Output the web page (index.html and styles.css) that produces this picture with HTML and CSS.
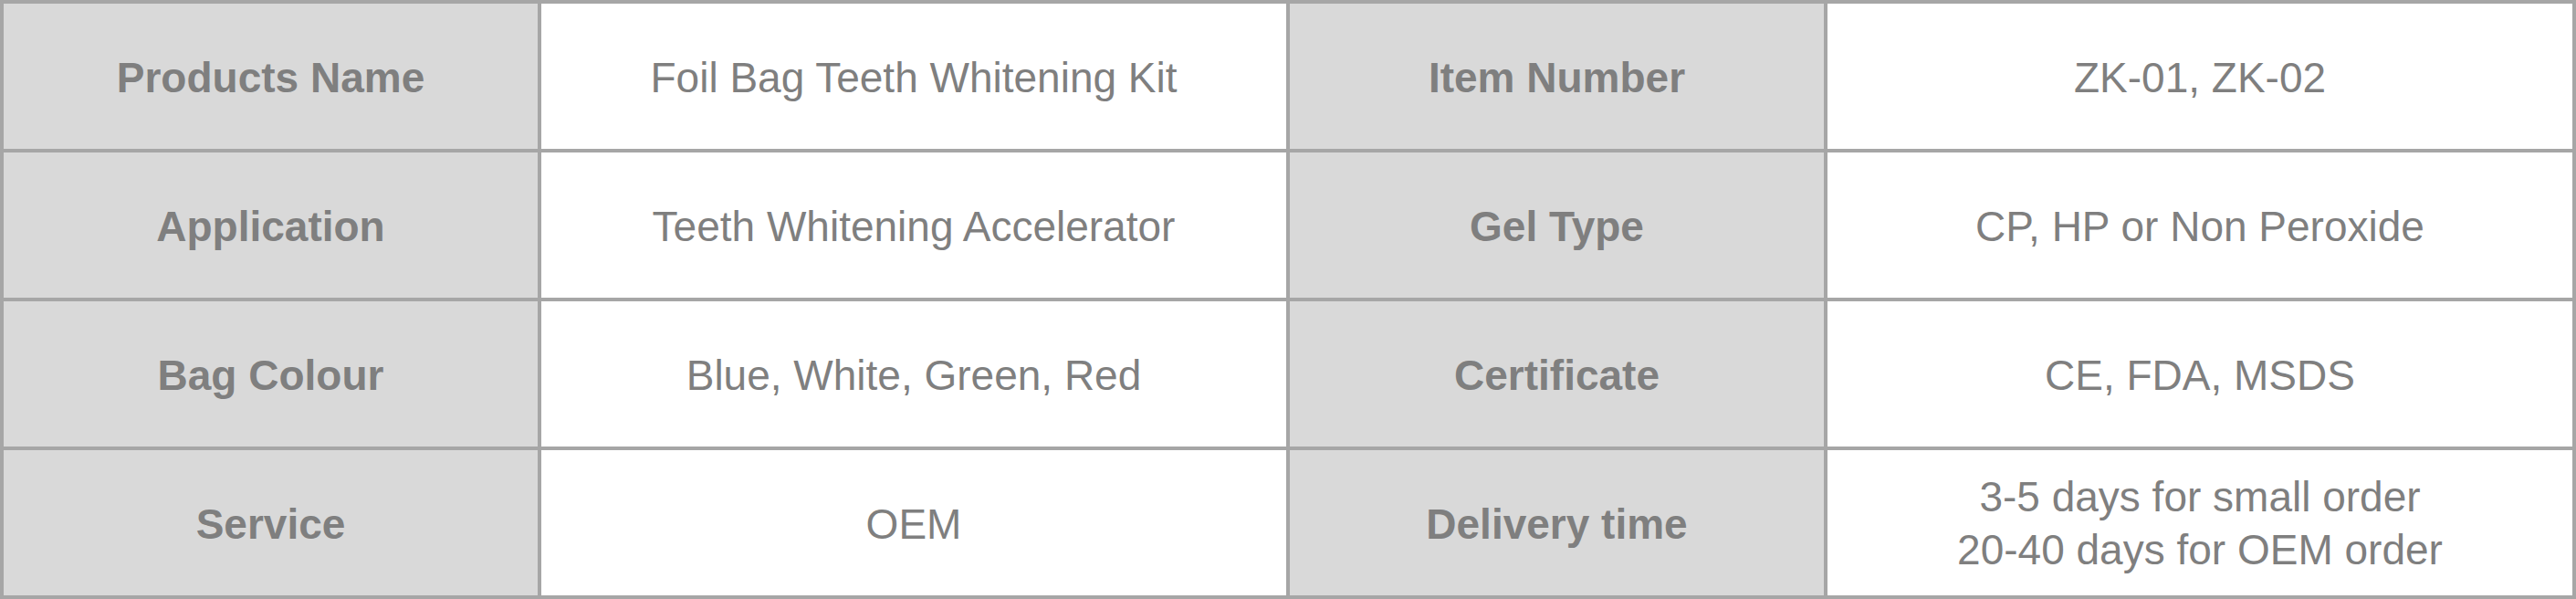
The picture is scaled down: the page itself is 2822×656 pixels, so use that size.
FILE: index.html
```html
<!DOCTYPE html>
<html>
<head>
<meta charset="utf-8">
<link rel="stylesheet" href="styles.css">
</head>
<body>
<div class="spec">
  <div class="cell head">Products Name</div>
  <div class="cell">Foil Bag Teeth Whitening Kit</div>
  <div class="cell head">Item Number</div>
  <div class="cell">ZK-01, ZK-02</div>

  <div class="cell head">Application</div>
  <div class="cell">Teeth Whitening Accelerator</div>
  <div class="cell head">Gel Type</div>
  <div class="cell">CP, HP or Non Peroxide</div>

  <div class="cell head">Bag Colour</div>
  <div class="cell">Blue, White, Green, Red</div>
  <div class="cell head">Certificate</div>
  <div class="cell">CE, FDA, MSDS</div>

  <div class="cell head">Service</div>
  <div class="cell">OEM</div>
  <div class="cell head">Delivery time</div>
  <div class="cell multi">3-5 days for small order<br>20-40 days for OEM order</div>
</div>
</body>
</html>
```

FILE: styles.css
```css
html, body {
  margin: 0;
  padding: 0;
  background: #ffffff;
}

.spec {
  display: grid;
  grid-template-columns: 585px 816px 585px 816px;
  grid-auto-rows: 159px;
  gap: 4px;
  padding: 4px;
  background: #a6a6a6;
  width: 2822px;
  height: 656px;
  box-sizing: border-box;
}

.cell {
  display: flex;
  align-items: center;
  justify-content: center;
  text-align: center;
  background: #ffffff;
  color: #7f7f7f;
  font-family: "Liberation Sans", Arial, sans-serif;
  font-size: 46px;
  line-height: 1.15;
  padding-top: 3px;
  box-sizing: border-box;
}

.head {
  background: #d9d9d9;
  font-weight: bold;
}

.multi {
  line-height: 1.25;
  padding-top: 2px;
}
```
